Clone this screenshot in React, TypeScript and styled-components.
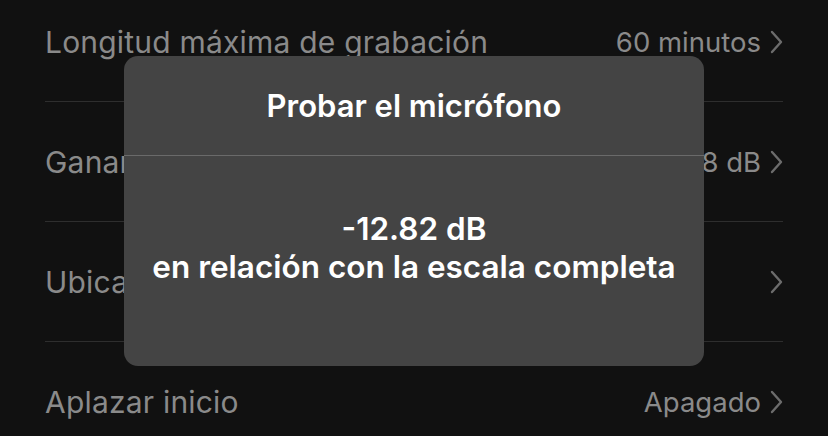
import React from 'react';
import styled, { createGlobalStyle } from 'styled-components';

const GlobalStyle = createGlobalStyle`
  html, body {
    margin: 0;
    padding: 0;
    background: #111111;
  }
  body {
    font-family: Inter, "Noto Sans", "Liberation Sans", sans-serif;
    -webkit-font-smoothing: antialiased;
  }
`;

const Screen = styled.div`
  position: relative;
  width: 828px;
  height: 436px;
  overflow: hidden;
  background: #111111;
`;

const List = styled.ul`
  list-style: none;
  margin: -18px 45px 0;
  padding: 0;
`;

const Row = styled.li<{ $last?: boolean }>`
  height: 120px;
  display: flex;
  align-items: center;
  justify-content: space-between;
  border-bottom: ${(p) => (p.$last ? 'none' : '1px solid #2e2e2e')};
  box-sizing: border-box;
`;

const Label = styled.span`
  font-size: 30px;
  color: #8a8a8a;
  letter-spacing: 0.2px;
`;

const Value = styled.span`
  display: flex;
  align-items: center;
  gap: 9px;
  font-size: 27.5px;
  color: #8a8a8a;
`;

const Chevron = styled.svg`
  width: 13px;
  height: 24px;
  flex: none;
`;

const Modal = styled.div`
  position: absolute;
  left: 124px;
  top: 56px;
  width: 580px;
  height: 310px;
  border-radius: 14px;
  background: #444444;
  display: flex;
  flex-direction: column;
  color: #ffffff;
`;

const ModalTitle = styled.div`
  height: 100px;
  display: flex;
  align-items: center;
  justify-content: center;
  font-size: 31px;
  font-weight: 600;
  border-bottom: 1px solid #6a6a6a;
  box-sizing: border-box;
`;

const ModalBody = styled.div`
  flex: 1;
  display: flex;
  flex-direction: column;
  align-items: center;
  justify-content: center;
  padding-bottom: 26px;
  font-size: 31.5px;
  font-weight: 600;
  line-height: 38px;
  text-align: center;
`;

const ChevronIcon = () => (
  <Chevron viewBox="0 0 13 24">
    <path d="M2 2 L11 12 L2 22" fill="none" stroke="#6c6c6c" strokeWidth="2.4" strokeLinecap="round" strokeLinejoin="round" />
  </Chevron>
);

const rows = [
  { label: 'Longitud máxima de grabación', value: '60 minutos' },
  { label: 'Ganancia de entrada', value: '-12.8 dB' },
  { label: 'Ubicación de grabación', value: '' },
  { label: 'Aplazar inicio', value: 'Apagado' },
];

export default function App() {
  return (
    <Screen>
      <GlobalStyle />
      <List>
        {rows.map((r, i) => (
          <Row key={r.label} $last={i === rows.length - 1}>
            <Label>{r.label}</Label>
            <Value>
              {r.value}
              <ChevronIcon />
            </Value>
          </Row>
        ))}
      </List>
      <Modal>
        <ModalTitle>Probar el micrófono</ModalTitle>
        <ModalBody>
          <div>-12.82 dB</div>
          <div>en relación con la escala completa</div>
        </ModalBody>
      </Modal>
    </Screen>
  );
}
